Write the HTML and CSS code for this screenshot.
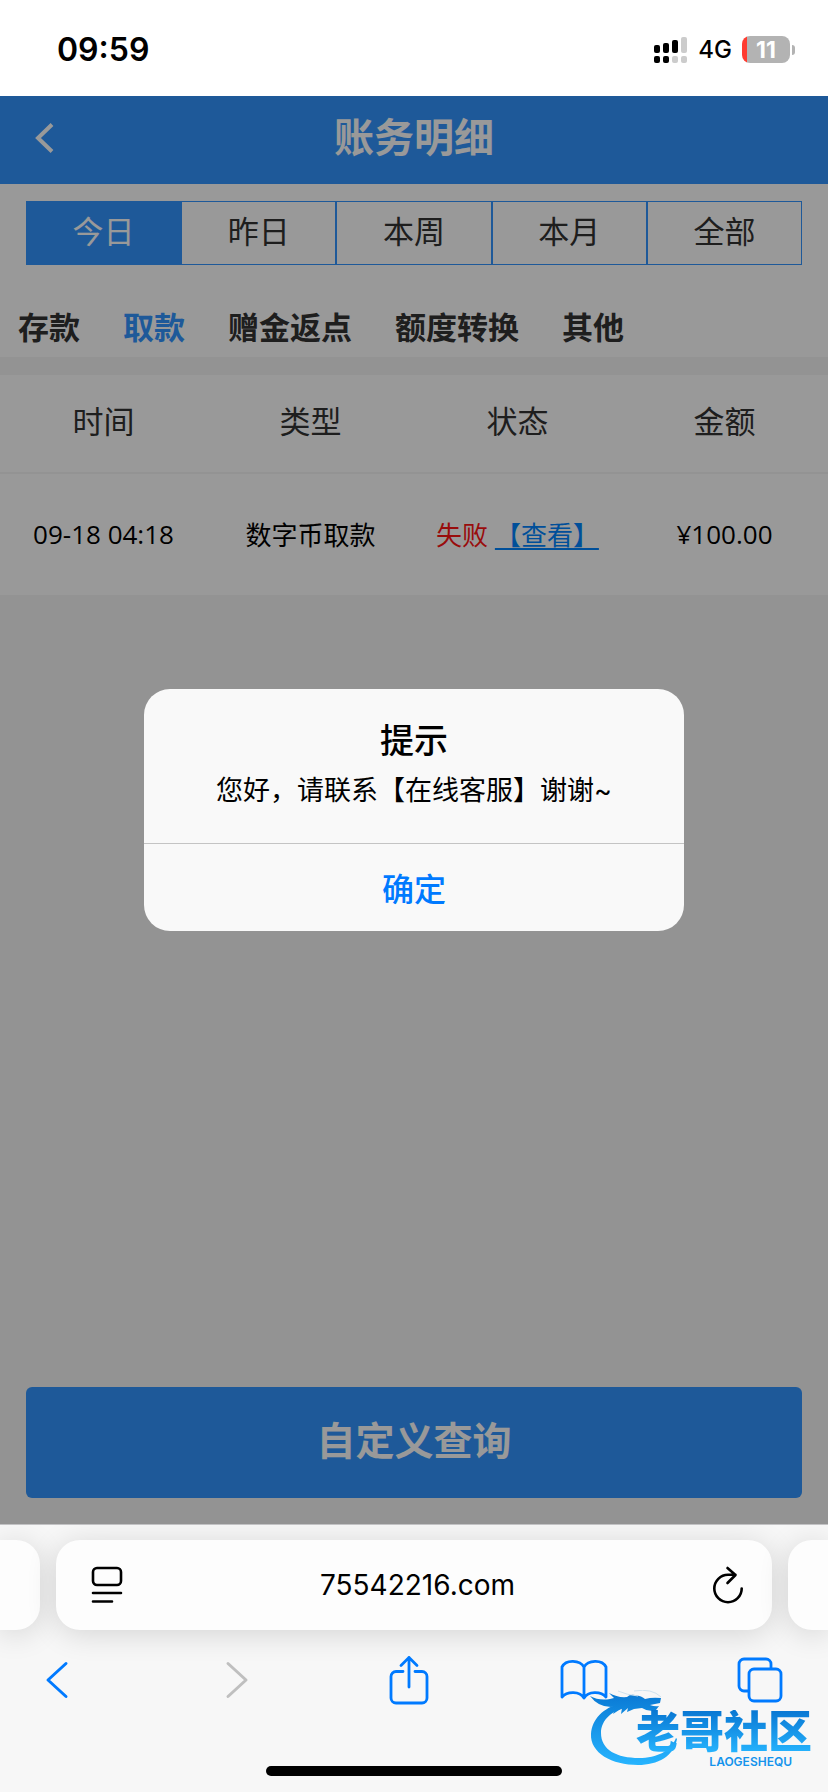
FILE: index.html
```html
<!DOCTYPE html>
<html lang="zh-CN">
<head>
<meta charset="utf-8">
<meta name="viewport" content="width=device-width, initial-scale=1">
<title>账务明细</title>
<link rel="stylesheet" href="styles.css">
</head>
<body>
<div class="status">
  <span class="clock">09:59</span>
  <div class="status-right">
    <svg class="signal" width="34" height="28" viewBox="0 0 34 28" aria-hidden="true">
      <g fill="#000"><rect x="0" y="9" width="6" height="8" rx="2"/><rect x="9" y="7" width="6" height="10" rx="2"/><rect x="18" y="4" width="6" height="13" rx="2"/><rect x="0" y="20" width="6" height="7" rx="2"/><rect x="9" y="20" width="6" height="7" rx="2"/></g>
      <g fill="#ccc"><rect x="27" y="1" width="6" height="16" rx="2"/><rect x="18" y="20" width="6" height="7" rx="2"/><rect x="27" y="20" width="6" height="7" rx="2"/></g>
    </svg>
    <span class="network">4G</span>
    <div class="battery"><span class="battery-body">11</span><span class="battery-tip"></span></div>
  </div>
</div>

<main class="page">
  <header class="title-bar">
    <button class="title-back" aria-label="返回"><svg width="20" height="30" viewBox="0 0 20 30" fill="none" stroke="#fff" stroke-width="4"><path d="M17 1.500 3 15l14 13.500"/></svg></button>
    <h1>账务明细</h1>
  </header>
  <div class="filters">
    <div class="ranges">
      <button class="range on">今日</button><button class="range">昨日</button><button class="range">本周</button><button class="range">本月</button><button class="range">全部</button>
    </div>
    <nav class="kinds">
      <button class="kind">存款</button><button class="kind on">取款</button><button class="kind">赠金返点</button><button class="kind">额度转换</button><button class="kind">其他</button>
    </nav>
  </div>
  <table class="records">
    <thead><tr><th>时间</th><th>类型</th><th>状态</th><th>金额</th></tr></thead>
    <tbody><tr><td>09-18 04:18</td><td>数字币取款</td><td><span class="failed">失败</span> <a href="#">【查看】</a></td><td>¥100.00</td></tr></tbody>
  </table>
  <button class="query">自定义查询</button>

  <div class="overlay">
    <section class="dialog" role="dialog" aria-labelledby="dialog-title">
      <div class="dialog-text">
        <h2 id="dialog-title">提示</h2>
        <p>您好，请联系【在线客服】谢谢~</p>
      </div>
      <button class="confirm">确定</button>
    </section>
  </div>
</main>

<footer class="browser">
  <div class="tabs">
    <div class="tab-edge left"></div>
    <div class="address">
      <button class="icon" aria-label="页面菜单"><svg width="32" height="38" viewBox="0 0 32 38" fill="none" stroke="#000" stroke-width="2.600" stroke-linecap="round"><rect x="2" y="2" width="28" height="17" rx="4"/><path d="M2 27h28M2 35.500h19"/></svg></button>
      <span class="host">75542216.com</span>
      <button class="icon" aria-label="刷新"><svg width="32" height="38" viewBox="0 0 32 38" fill="none" stroke="#000" stroke-width="2.600" stroke-linecap="round" stroke-linejoin="round"><path d="M29.700 22.500A13.700 13.700 0 1 1 16 8.800h7.500M15.500 2l8 7-8 8"/></svg></button>
    </div>
    <div class="tab-edge right"></div>
  </div>
  <nav class="tools">
    <button class="icon" aria-label="后退"><svg width="24" height="40" viewBox="0 0 24 40" fill="none" stroke="#007aff" stroke-width="3" stroke-linecap="round" stroke-linejoin="round"><path d="M21 3.500 3 20l18 16.500"/></svg></button>
    <button class="icon" aria-label="前进" disabled><svg width="32" height="40" viewBox="0 0 32 40" fill="none" stroke="#bfbfbf" stroke-width="3" stroke-linecap="round" stroke-linejoin="round"><path d="m11 3.500 18 16.500-18 16.500"/></svg></button>
    <button class="icon" aria-label="分享"><svg width="40" height="50" viewBox="0 0 40 50" fill="none" stroke="#007aff" stroke-width="2.800" stroke-linecap="round" stroke-linejoin="round"><path d="M14 16.500H7a5 5 0 0 0-5 5V43a5 5 0 0 0 5 5h26a5 5 0 0 0 5-5V21.500a5 5 0 0 0-5-5h-7M20 32V2.500M12 10.500l8-8 8 8"/></svg></button>
    <button class="icon" aria-label="书签"><svg width="48" height="42" viewBox="0 0 48 42" fill="none" stroke="#007aff" stroke-width="2.800" stroke-linecap="round" stroke-linejoin="round"><path d="M24 8C20 1 6 0 2 8v30c5-6 18-6 22 1 4-7 17-7 22-1V8C42 0 28 1 24 8ZM24 8v31"/></svg></button>
    <button class="icon" aria-label="标签页"><svg width="46" height="46" viewBox="0 0 46 46" fill="none" stroke="#007aff" stroke-width="2.800" stroke-linejoin="round"><path d="M12 34H7a5 5 0 0 1-5-5V7a5 5 0 0 1 5-5h22a5 5 0 0 1 5 5v5"/><rect x="12" y="12" width="32" height="32" rx="5"/></svg></button>
  </nav>
  <div class="home"></div>
</footer>

<div class="watermark">
  <svg class="dragon" width="92" height="76" viewBox="0 0 92 76" aria-hidden="true">
    <defs><linearGradient id="wave" x1="0" y1="0" x2="0" y2="76" gradientUnits="userSpaceOnUse"><stop offset="0" stop-color="#0876d2"/><stop offset="1" stop-color="#27b5ff"/></linearGradient></defs>
    <g fill="url(#wave)">
      <path d="M31 13C13 18 2 29 1 44 0 63 22 75 48 75c20 0 36-9 39-26l-1-1C81 61 67 68 49 68 27 68 11 60 11 43 11 30 22 20 39 17Z"/>
      <path d="M0 6q9 5 20 3l4-1-5-5q9 5 18 4 3-3 8-2 7 1 10 4 7-2 16-1l-1 5-10 2q5 2 9 1l-3 4q-8 2-14-2l-8 1-7 3 1-4-7 6 1-6-9 6 4-8-6 1q-13 0-21-11Z"/>
    </g>
    <path d="M28 1q9 4 20 5M44 1q18-3 27 6" fill="none" stroke="#cfe2ee" stroke-width="1"/>
  </svg>
  <div class="brand"><strong>老哥社区</strong><span>LAOGESHEQU</span></div>
</div>
</body>
</html>
```
FILE: styles.css
```css
* { box-sizing: border-box; }
body {
  margin: 0;
  min-height: 100vh;
  display: flex;
  flex-direction: column;
  position: relative;
  overflow-x: hidden;
  background: #fff;
  color: #000;
  font-family: Inter, "Noto Sans CJK SC", sans-serif;
}
button { margin: 0; padding: 0; border: 0; background: none; color: inherit; font: inherit; }
svg { display: block; }
h1, h2, p { margin: 0; }

.status { height: 96px; display: flex; align-items: center; justify-content: space-between; padding: 3px 33px 0 57px; }
.clock { font-size: 32px; font-weight: 600; }
.status-right { display: flex; align-items: center; gap: 10px; }
.network { font-size: 24px; font-weight: 500; }
.battery { display: flex; align-items: center; gap: 2px; }
.battery-body {
  width: 48px; height: 27px; border-radius: 8px;
  background: linear-gradient(90deg, #ff3b30 5px, #b3b3b3 5px);
  color: #fff; font-size: 23px; font-weight: 700; line-height: 28px; text-align: center;
}
.battery-tip { width: 3px; height: 10px; border-radius: 0 4px 4px 0; background: #b3b3b3; }

.page { flex: 1; position: relative; display: flex; flex-direction: column; background: #f5f5f5; color: #333; }
.title-bar { height: 88px; display: grid; grid-template-columns: 60px 1fr 60px; align-items: center; padding: 0 35px 4px; background: #3395ff; color: #fff; }
.title-bar h1 { font-size: 40px; font-weight: 700; line-height: 48px; text-align: center; }
.filters { background: #fff; padding: 17px 26px 0; }
.ranges { display: grid; grid-template-columns: repeat(5, 1fr); }
.range { height: 64px; border: 1px solid #3395ff; font-size: 31px; line-height: 60px; padding-bottom: 2px; }
.range.on { background: #3395ff; color: #fff; }
.kinds { display: flex; gap: 43px; height: 92px; margin: 0 -8px; padding-top: 32px; }
.kind { height: 60px; font-size: 31px; font-weight: 700; line-height: 62px; white-space: nowrap; }
.kind.on { color: #3395ff; }

.records { width: 100%; margin-top: 18px; table-layout: fixed; border-collapse: collapse; background: #fff; text-align: center; }
.records th { height: 98px; padding: 0 0 8px; border-bottom: 2px solid #f5f5f5; font-size: 31px; font-weight: 400; }
.records td { height: 122px; padding: 0 0 2px; color: #000; font-family: "Open Sans", "Noto Sans CJK SC", sans-serif; font-size: 26px; white-space: nowrap; }
.failed { color: #ff1414; }
.records a { color: #0084ff; text-decoration-thickness: 2px; text-underline-offset: 3px; }
.query { height: 111px; margin: auto 26px 26px; border-radius: 6px; background: #3395ff; color: #fff; font-size: 39px; font-weight: 700; padding-bottom: 10px; }

.overlay { position: absolute; inset: 0; display: flex; align-items: center; justify-content: center; background: rgba(0, 0, 0, .4); }
.dialog { width: 540px; max-width: 90%; border-radius: 26px; overflow: hidden; background: #f9f9f9; color: #000; text-align: center; }
.dialog-text { padding: 28px 20px 30px; }
.dialog h2 { font-size: 34px; font-weight: 500; line-height: 48px; }
.dialog p { margin-top: 4px; font-size: 27px; line-height: 44px; }
.confirm { width: 100%; height: 88px; padding-bottom: 2px; border-top: 1px solid #c4c4c4; color: #007aff; font-size: 32px; font-weight: 500; }

.browser { height: 268px; display: flex; flex-direction: column; background: #f7f7f7; border-top: 1px solid #c2c2c4; overflow: hidden; }
.tabs { display: flex; gap: 16px; padding-top: 15px; }
.tab-edge, .address { height: 90px; background: #fdfdfd; box-shadow: 0 4px 30px rgba(0, 0, 0, .14); }
.tab-edge { width: 40px; }
.left { border-radius: 0 24px 24px 0; }
.right { border-radius: 24px 0 0 24px; }
.address { flex: 1; display: flex; align-items: center; justify-content: space-between; padding: 0 28px 0 35px; border-radius: 24px; }
.host { font-size: 28px; }
.tools { display: flex; align-items: center; justify-content: space-between; height: 50px; margin-top: 25px; padding: 0 44px 0 33px; }
.tools .icon { width: 48px; display: flex; justify-content: center; }
.home { width: 296px; height: 10px; margin: auto auto 16px; border-radius: 5px; background: #000; }

.watermark { position: absolute; right: 16px; bottom: 26px; width: 222px; height: 76px; }
.dragon { position: absolute; left: 0; top: 0; }
.brand { position: absolute; right: 0; top: 20px; display: flex; flex-direction: column; align-items: flex-end; gap: 2px; color: #1493ec; }
.brand strong { font-size: 44px; font-weight: 900; line-height: 44px; background: linear-gradient(#0876d2, #27b5ff); background-clip: text; color: transparent; }
.brand span { padding-right: 20px; font-size: 12px; line-height: 12px; font-weight: 600; }
```
